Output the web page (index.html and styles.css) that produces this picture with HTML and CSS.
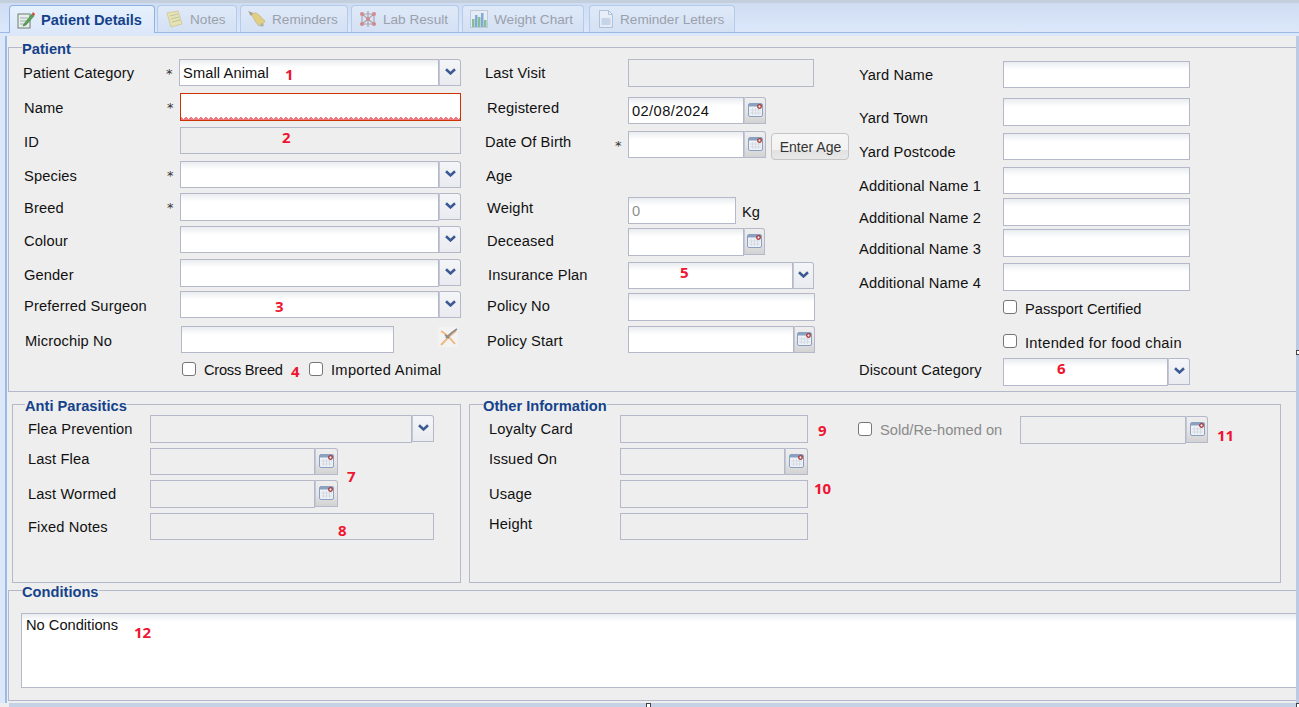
FILE: index.html
```html
<!DOCTYPE html>
<html lang="en">
<head>
<meta charset="utf-8">
<title>Patient Details</title>
<link rel="stylesheet" href="styles.css">
</head>
<body>
<svg class="defs" aria-hidden="true">
  <symbol id="chev" viewBox="0 0 11 7"><path d="M1 1.200 5.500 5.400 10 1.200" fill="none" stroke="#3b5a93" stroke-width="2.600"/></symbol>
  <symbol id="cal" viewBox="0 0 15 14">
    <rect x=".5" y=".5" width="14" height="13" rx="1.500" fill="#eef1f6" stroke="#8aa0c0"/>
    <rect x="1" y="1" width="13" height="2.500" fill="#8aa0c0"/>
    <path d="M2 7h11M2 10h11M4.500 5v7M7.500 5v7M10.500 5v7" stroke="#d5dae3" fill="none"/>
    <circle cx="11.500" cy="3.500" r="1.800" fill="#f4e8e8" stroke="#a33" stroke-width="1.300"/>
  </symbol>
</svg>
<div class="app">
  <div class="tabbar">
    <div class="tab active tw1">
      <svg class="tab-icon" viewBox="0 0 20 20"><rect x="2" y="4" width="12" height="14" fill="#e8eef0" stroke="#6d7f6d"/><path d="M4 8h8M4 11h8M4 14h6" stroke="#9fb0a8"/><path d="M8 14 16 4l2 2-8 9-3 1z" fill="#5aa354" stroke="#3c7a3a" stroke-width=".6"/><path d="M16 4l1-2 2 2-1 2z" fill="#d9443b"/></svg>
      <span>Patient Details</span>
    </div>
    <div class="tab tw2">
      <svg class="tab-icon" viewBox="0 0 20 20"><path d="M3 4 14 2l4 13-11 3z" fill="#f2e27a" stroke="#c9b85a"/><path d="M6 7l8-2M7 10l8-2M8 13l8-2" stroke="#a8a468"/></svg>
      <span>Notes</span>
    </div>
    <div class="tab tw3">
      <svg class="tab-icon" viewBox="0 0 20 20"><path d="M5 5c3-2 5-1 7 1l6 6c-1 2-3 4-6 5-2-2-4-5-5-7-1-2-2-3-2-5z" fill="#e8bd24" stroke="#a98a22" stroke-width=".7"/><path d="M1 2l5 2-2 3z" fill="#7d6028"/><circle cx="15" cy="16" r="1.800" fill="#8f8f70"/></svg>
      <span>Reminders</span>
    </div>
    <div class="tab tw3">
      <svg class="tab-icon" viewBox="0 0 20 20"><path d="M4 5h12v10H4zM4 5l6 5 6-5M4 15l6-5 6 5M10 2v16" fill="none" stroke="#8a7272" stroke-width="1.200"/><g fill="#c9423a"><circle cx="4" cy="5" r="2"/><circle cx="16" cy="5" r="2"/><circle cx="4" cy="15" r="2"/><circle cx="16" cy="15" r="2"/><circle cx="10" cy="10" r="2"/></g></svg>
      <span>Lab Result</span>
    </div>
    <div class="tab tw4">
      <svg class="tab-icon" viewBox="0 0 20 20"><rect x="1.500" y="1.500" width="17" height="17" fill="#eef2f6" stroke="#aab5c2"/><rect x="3" y="10" width="2.500" height="8" fill="#3da04a"/><rect x="6" y="6" width="2.500" height="12" fill="#3d78c0"/><rect x="9" y="8" width="2.500" height="10" fill="#3da04a"/><rect x="12" y="4" width="2.500" height="14" fill="#3d78c0"/><rect x="15" y="11" width="2.500" height="7" fill="#3da04a"/></svg>
      <span>Weight Chart</span>
    </div>
    <div class="tab tw5">
      <svg class="tab-icon" viewBox="0 0 20 20"><path d="M3.500 1.500h9l4 4v13h-13z" fill="#f2f5fa" stroke="#8ea3c2"/><path d="M12.500 1.500v4h4" fill="none" stroke="#8ea3c2"/><rect x="5.500" y="9" width="9" height="7" fill="#b9c8de"/></svg>
      <span>Reminder Letters</span>
    </div>
  </div>
  <div class="tabfoot"></div>

  <div class="frame">
    <div class="pane">
      <fieldset class="box box-patient">
        <legend>Patient</legend>
        <div class="patient-cols">
          <div class="col col-left">
            <div class="row nudge-l"><label class="lbl c0">Patient Category</label><span class="star">*</span><div class="field"><input class="in w260" value="Small Animal"><span class="trigger combo"><svg class="chev"><use href="#chev"/></svg></span></div></div>
            <div class="row"><label class="lbl">Name</label><span class="star">*</span><input class="in err w281 tall"></div>
            <div class="row"><label class="lbl">ID</label><span class="star"></span><input class="in off w281" disabled></div>
            <div class="row"><label class="lbl">Species</label><span class="star">*</span><div class="field"><input class="in w259"><span class="trigger combo"><svg class="chev"><use href="#chev"/></svg></span></div></div>
            <div class="row"><label class="lbl">Breed</label><span class="star">*</span><div class="field"><input class="in w259 tall"><span class="trigger combo"><svg class="chev"><use href="#chev"/></svg></span></div></div>
            <div class="row"><label class="lbl">Colour</label><span class="star"></span><div class="field"><input class="in w259"><span class="trigger combo"><svg class="chev"><use href="#chev"/></svg></span></div></div>
            <div class="row"><label class="lbl dn2">Gender</label><span class="star"></span><div class="field"><input class="in w259 tall"><span class="trigger combo"><svg class="chev"><use href="#chev"/></svg></span></div></div>
            <div class="row"><label class="lbl">Preferred Surgeon</label><span class="star"></span><div class="field"><input class="in w259"><span class="trigger combo"><svg class="chev"><use href="#chev"/></svg></span></div></div>
            <div class="row nudge-r"><label class="lbl">Microchip No</label><span class="star"></span><input class="in w213"><svg class="clear" viewBox="0 0 20 20"><rect width="20" height="20" fill="#f3f3f3"/><path d="M3 18C8 13 12 8 18 4" stroke="#f0b980" stroke-width="2" fill="none"/><path d="M3 4C8 7 13 12 17 17" stroke="#f0b980" stroke-width="2" fill="none"/><path d="M8 11C11 8 14 5 19 2M7 8c2 1 3 2 4 3" stroke="#8c8c8c" stroke-width="1.800" fill="none"/></svg></div>
            <div class="row checks-left"><label class="check first"><input type="checkbox"><span>Cross Breed</span></label><label class="check wide"><input type="checkbox"><span>Imported Animal</span></label></div>
          </div>

          <div class="col col-mid">
            <div class="row"><label class="lbl c0">Last Visit</label><input class="in off w186 tall" disabled></div>
            <div class="row"><label class="lbl x2 up2">Registered</label><div class="field"><input class="in w116 digits" value="02/08/2024"><span class="trigger date"><svg class="cal"><use href="#cal"/></svg></span></div></div>
            <div class="row"><label class="lbl short up2">Date Of Birth</label><span class="star">*</span><div class="field"><input class="in w116"><span class="trigger date"><svg class="cal"><use href="#cal"/></svg></span></div><button class="btn">Enter Age</button></div>
            <div class="row blank"><label class="lbl x1 up1">Age</label></div>
            <div class="row"><label class="lbl x2 up2">Weight</label><input class="in w108 grey" value="0"><span class="unit">Kg</span></div>
            <div class="row"><label class="lbl x2 up1">Deceased</label><div class="field"><input class="in w116 tall"><span class="trigger date w21"><svg class="cal"><use href="#cal"/></svg></span></div></div>
            <div class="row"><label class="lbl x3 up1">Insurance Plan</label><div class="field"><input class="in w165"><span class="trigger combo w21"><svg class="chev"><use href="#chev"/></svg></span></div></div>
            <div class="row"><label class="lbl x2 up1">Policy No</label><input class="in w187 tall"></div>
            <div class="row"><label class="lbl x2">Policy Start</label><div class="field"><input class="in w166"><span class="trigger date w21"><svg class="cal"><use href="#cal"/></svg></span></div></div>
          </div>

          <div class="col col-right">
            <div class="row"><label class="lbl c0">Yard Name</label><input class="in w187"></div>
            <div class="row"><label class="lbl dn6">Yard Town</label><input class="in w187 tall"></div>
            <div class="row"><label class="lbl dn6">Yard Postcode</label><input class="in w187"></div>
            <div class="row"><label class="lbl dn6">Additional Name 1</label><input class="in w187"></div>
            <div class="row"><label class="lbl dn6">Additional Name 2</label><input class="in w187 tall"></div>
            <div class="row"><label class="lbl dn6">Additional Name 3</label><input class="in w187 tall"></div>
            <div class="row"><label class="lbl dn6">Additional Name 4</label><input class="in w187 tall"></div>
            <div class="row checks-right"><label class="check"><input type="checkbox"><span>Passport Certified</span></label></div>
            <div class="row checks-right"><label class="check wide"><input type="checkbox"><span>Intended for food chain</span></label></div>
            <div class="row"><label class="lbl up2">Discount Category</label><div class="field"><input class="in w165 tall"><span class="trigger combo"><svg class="chev"><use href="#chev"/></svg></span></div></div>
          </div>
        </div>
      </fieldset>

      <div class="box-row">
        <fieldset class="box box-anti">
          <legend>Anti Parasitics</legend>
          <div class="sub-rows">
            <div class="row"><label class="lbl c0">Flea Prevention</label><div class="field"><input class="in off w262 tall" disabled><span class="trigger combo"><svg class="chev"><use href="#chev"/></svg></span></div></div>
            <div class="row"><label class="lbl up2">Last Flea</label><div class="field"><input class="in off w165" disabled><span class="trigger date w23"><svg class="cal"><use href="#cal"/></svg></span></div></div>
            <div class="row"><label class="lbl c0">Last Wormed</label><div class="field"><input class="in off w165 tall" disabled><span class="trigger date w23"><svg class="cal"><use href="#cal"/></svg></span></div></div>
            <div class="row"><label class="lbl c0">Fixed Notes</label><input class="in off w284" disabled></div>
          </div>
        </fieldset>
        <fieldset class="box box-other">
          <legend>Other Information</legend>
          <div class="other-cols">
            <div class="sub-rows">
              <div class="row"><label class="lbl c0">Loyalty Card</label><input class="in off w188 tall" disabled></div>
              <div class="row"><label class="lbl up2">Issued On</label><div class="field"><input class="in off w165" disabled><span class="trigger date w23"><svg class="cal"><use href="#cal"/></svg></span></div></div>
              <div class="row"><label class="lbl c0">Usage</label><input class="in off w188 tall" disabled></div>
              <div class="row"><label class="lbl up2">Height</label><input class="in off w188" disabled></div>
            </div>
            <div class="sold">
              <label class="check muted"><input type="checkbox" disabled><span>Sold/Re-homed on</span></label>
              <div class="field"><input class="in off w166 tall" disabled><span class="trigger date"><svg class="cal"><use href="#cal"/></svg></span></div>
            </div>
          </div>
        </fieldset>
      </div>

      <fieldset class="box box-cond">
        <legend>Conditions</legend>
        <textarea class="notes" readonly>No Conditions</textarea>
      </fieldset>
    </div>
  </div>
  <div class="footbar"></div>

  <span class="mark m1">1</span>
  <span class="mark m2">2</span>
  <span class="mark m3">3</span>
  <span class="mark m4">4</span>
  <span class="mark m5">5</span>
  <span class="mark m6">6</span>
  <span class="mark m7">7</span>
  <span class="mark m8">8</span>
  <span class="mark m9">9</span>
  <span class="mark m10">10</span>
  <span class="mark m11">11</span>
  <span class="mark m12">12</span>
  <span class="handle h-right"></span>
  <span class="handle h-bottom"></span>
  <span class="handle h-corner"></span>
</div>
</body>
</html>
```

FILE: styles.css
```css
* { box-sizing: border-box; }
html, body { margin: 0; padding: 0; }
body {
  overflow: hidden;
  font-family: "Liberation Sans", Arial, sans-serif;
  font-size: 14.67px;
  color: #111;
}
.defs { display: none; }
.app {
  position: relative;
  width: 1299px;
  height: 707px;
  display: flex;
  flex-direction: column;
  overflow: hidden;
  background: #eeeeee;
}

/* tab strip */
.tabbar {
  flex: none;
  height: 33px;
  display: flex;
  gap: 3px;
  padding: 2px 0 0 9px;
  border-top: 3px solid #c4cfde;
  border-bottom: 1px solid #99bbe8;
  background: linear-gradient(#cfdcf2, #dce8fa);
}
.tabfoot { flex: none; height: 3px; background: #dce8fa; }
.tab {
  flex: none;
  height: 27px;
  display: flex;
  align-items: center;
  padding-left: 6px;
  border: 1px solid #b4cbea;
  border-bottom: 0;
  border-radius: 4px 4px 0 0;
  background: linear-gradient(#dfe9f8, #d4e1f4);
  font-size: 13.6px;
  color: #9aa1ab;
  white-space: nowrap;
}
.tab .tab-icon { opacity: .55; }
.tab-icon { flex: none; width: 20px; height: 20px; margin-right: 5px; }
.tab.active {
  height: 28px;
  margin-bottom: -1px;
  margin-right: -1px;
  border-color: #8db2e3;
  background: linear-gradient(#e6f0fd, #dce8fa);
  font-size: 14.67px;
  color: #15428b;
  font-weight: bold;
}
.tab.active .tab-icon { opacity: 1; }
.tw1 { width: 146px; }
.tw2 { width: 80px; }
.tw2 .tab-icon { margin-right: 6px; }
.tw3 { width: 108px; }
.tw4 { width: 122px; margin-right: 2px; }
.tw5 { width: 146px; }
.tw5 .tab-icon { margin-right: 4px; }

/* frame */
.frame {
  flex: 1;
  min-height: 0;
  display: flex;
  padding-left: 5px;
  background: #dce8fa;
}
.pane {
  flex: 1;
  min-width: 0;
  display: flex;
  flex-direction: column;
  padding-left: 1px;
  border-left: 2px solid #99bbe8;
  border-right: 3px solid #bccbe3;
  background: #eeeeee;
}
.footbar { flex: none; height: 4px; margin-left: 9px; background: #c5d1e5; }

/* field sets */
.box {
  margin: 0;
  padding: 0;
  min-width: 0;
  border: 1px solid #b5b8c8;
}
.box legend {
  margin-left: 13px;
  padding: 4px 0 0;
  height: 20px;
  line-height: 16px;
  font-weight: bold;
  color: #15428b;
  white-space: nowrap;
}
.box-patient {
  flex: none;
  height: 355px;
  margin-top: 1px;
  border-right: 0;
}
.patient-cols { display: flex; padding-top: 2px; }
.col { display: grid; align-items: start; align-content: start; }
.col-left {
  width: 476px;
  padding-left: 15px;
  grid-template-rows: 34px 34px 34px 32px 33px 33px 32px 35px 36px auto;
}
.col-mid {
  width: 374px;
  grid-template-rows: 38px 34px 32px 34px 31px 34px 31px 33px auto;
}
.col-right {
  grid-template-rows: 37px 34px 34px 32px 31px 34px 37px 34px 24px auto;
  padding-top: 2px;
}
.box-row {
  flex: none;
  display: flex;
  gap: 8px;
  margin: 2px 0 0 4px;
}
.box-anti { width: 449px; height: 189px; }
.box-anti legend { margin-left: 12px; }
.box-other { width: 812px; height: 189px; }
.box-cond {
  flex: none;
  height: 121px;
  margin-top: -3px;
  border-right: 0;
}
.sub-rows {
  display: grid;
  align-items: start;
  grid-template-rows: 33px 32px 33px auto;
  padding-top: 1px;
}
.box-anti .sub-rows { padding-left: 15px; }
.box-anti .lbl { width: 122px; }
.box-other .sub-rows { padding-left: 19px; }
.box-other .lbl { width: 131px; }
.other-cols { display: flex; }
.sold {
  display: flex;
  align-items: center;
  margin: 2px 0 0 50px;
  height: 28px;
}

/* rows */
.row { display: flex; align-items: center; }
.blank { min-height: 27px; }
.nudge-l { margin-left: -1px; }
.nudge-r { margin-left: 1px; }
.lbl {
  flex: none;
  line-height: 16px;
  padding-top: 2px;
  letter-spacing: .13px;
  white-space: nowrap;
}
.col-left .lbl { width: 143px; }
.col-mid .lbl { width: 143px; }
.col-mid .lbl.short { width: 129px; }
.col-right .lbl { width: 144px; }
.c0 { padding-top: 0; }
.dn2 { padding-top: 4px; }
.up1 { padding-top: 0; padding-bottom: 2px; }
.up2 { padding-top: 0; padding-bottom: 5px; }
.dn6 { padding-top: 12px; }
.x1 { padding-left: 1px; }
.x2 { padding-left: 2px; }
.x3 { padding-left: 3px; }
.star {
  flex: none;
  width: 13px;
  height: 16px;
  padding-top: 1px;
  font-family: "DejaVu Sans", sans-serif;
  font-size: 13px;
  line-height: 16px;
  color: #333;
}
.col-mid .star { width: 14px; padding-left: 1px; }
.unit { margin: 3px 0 0 6px; }

/* inputs */
.in {
  display: block;
  flex: none;
  height: 27px;
  margin: 0;
  padding: 1px 3px 0;
  border: 1px solid #b5b8c8;
  border-radius: 0;
  outline: 0;
  background: linear-gradient(#e9ecef, #fbfbfc 6px, #ffffff 8px);
  font: inherit;
  letter-spacing: .1px;
  color: #111;
}
.tall { height: 28px; }
.off { background: #eeeeee; }
.grey { color: #8f8f8f; }
.digits { letter-spacing: .4px; }
.err {
  border-color: #cc3300;
  background:
    linear-gradient(45deg, #ee7a82 35%, transparent 35%) left bottom / 5px 5px repeat-x,
    linear-gradient(-45deg, #ee7a82 35%, transparent 35%) left bottom / 5px 5px repeat-x,
    #ffffff;
}
.w108 { width: 108px; }
.w116 { width: 116px; }
.w165 { width: 165px; }
.w166 { width: 166px; }
.w186 { width: 186px; }
.w187 { width: 187px; }
.w188 { width: 188px; }
.w213 { width: 213px; }
.w259 { width: 259px; }
.w260 { width: 260px; }
.w262 { width: 262px; }
.w281 { width: 281px; }
.w284 { width: 284px; }

.field { display: flex; align-items: flex-start; flex: none; }
.trigger {
  flex: none;
  width: 22px;
  height: 27px;
  display: flex;
  align-items: center;
  justify-content: center;
  border: 1px solid #b5b8c8;
  border-left-color: #c3c6d4;
  border-radius: 0 3px 0 0;
}
.trigger.w21 { width: 21px; }
.trigger.w23 { width: 23px; }
.combo {
  padding-bottom: 2px;
  background: linear-gradient(#f4f5f8, #e9ebf0);
}
.date {
  padding-bottom: 2px;
  background: linear-gradient(#eeeeee, #e4e4e4 55%, #d2d2d2);
}
.chev { width: 11px; height: 7px; }
.cal { width: 15px; height: 14px; }
.clear { flex: none; width: 20px; height: 20px; margin: -5px 0 0 44px; }

.btn {
  flex: none;
  width: 78px;
  height: 27px;
  margin: 2px 0 -2px 5px;
  padding: 0 0 0 1px;
  border: 1px solid #c4c4c4;
  border-radius: 4px;
  background: linear-gradient(#f6f6f6, #f2f2f2 65%, #e2e2e2 66%, #e8e8e8);
  font: inherit;
  font-size: 14px;
  color: #333;
}

/* check boxes */
.check {
  display: flex;
  align-items: center;
  gap: 8px;
  line-height: 16px;
  white-space: nowrap;
}
.check input {
  appearance: none;
  flex: none;
  width: 14px;
  height: 14px;
  margin: 0 0 2px;
  border: 1px solid #767676;
  border-radius: 3px;
  background: #fff;
}
.wide span { letter-spacing: .3px; }
.muted { color: #8a8a8a; margin-right: 17px; width: 145px; }
.checks-left { padding-left: 158px; }
.first { width: 127px; }
.first span { letter-spacing: -.25px; }
.checks-right { padding-left: 144px; }
.checks-right span { padding-top: 1px; }
.checks-right input { margin-bottom: 3px; }

/* conditions */
.notes {
  display: block;
  width: 1275px;
  height: 75px;
  margin: 13px 0 0 12px;
  padding: 3px 4px;
  border: 1px solid #b5b8c8;
  border-right: 0;
  border-radius: 0;
  outline: 0;
  resize: none;
  overflow: hidden;
  background: linear-gradient(#e9ecef, #fbfbfc 6px, #ffffff 8px);
  font: inherit;
  line-height: 16px;
  color: #111;
}

/* red numbered notes over the form */
.mark {
  position: absolute;
  font-family: "Open Sans", sans-serif;
  font-size: 15px;
  font-weight: bold;
  line-height: 16px;
  color: #ee1530;
}
.m1 { left: 285px; top: 66px; }
.m2 { left: 282px; top: 129px; }
.m3 { left: 275px; top: 298px; }
.m4 { left: 291px; top: 363px; }
.m5 { left: 680px; top: 264px; }
.m6 { left: 1057px; top: 360px; }
.m7 { left: 347px; top: 468px; }
.m8 { left: 338px; top: 522px; }
.m9 { left: 818px; top: 422px; }
.m10 { left: 814px; top: 480px; }
.m11 { left: 1217px; top: 427px; }
.m12 { left: 134px; top: 624px; }

.handle {
  position: absolute;
  width: 5px;
  height: 5px;
  border: 1px solid #444;
  background: #fff;
}
.h-right { left: 1296px; top: 350px; }
.h-bottom { left: 646px; top: 703px; }
.h-corner { left: 1296px; top: 703px; }
```
